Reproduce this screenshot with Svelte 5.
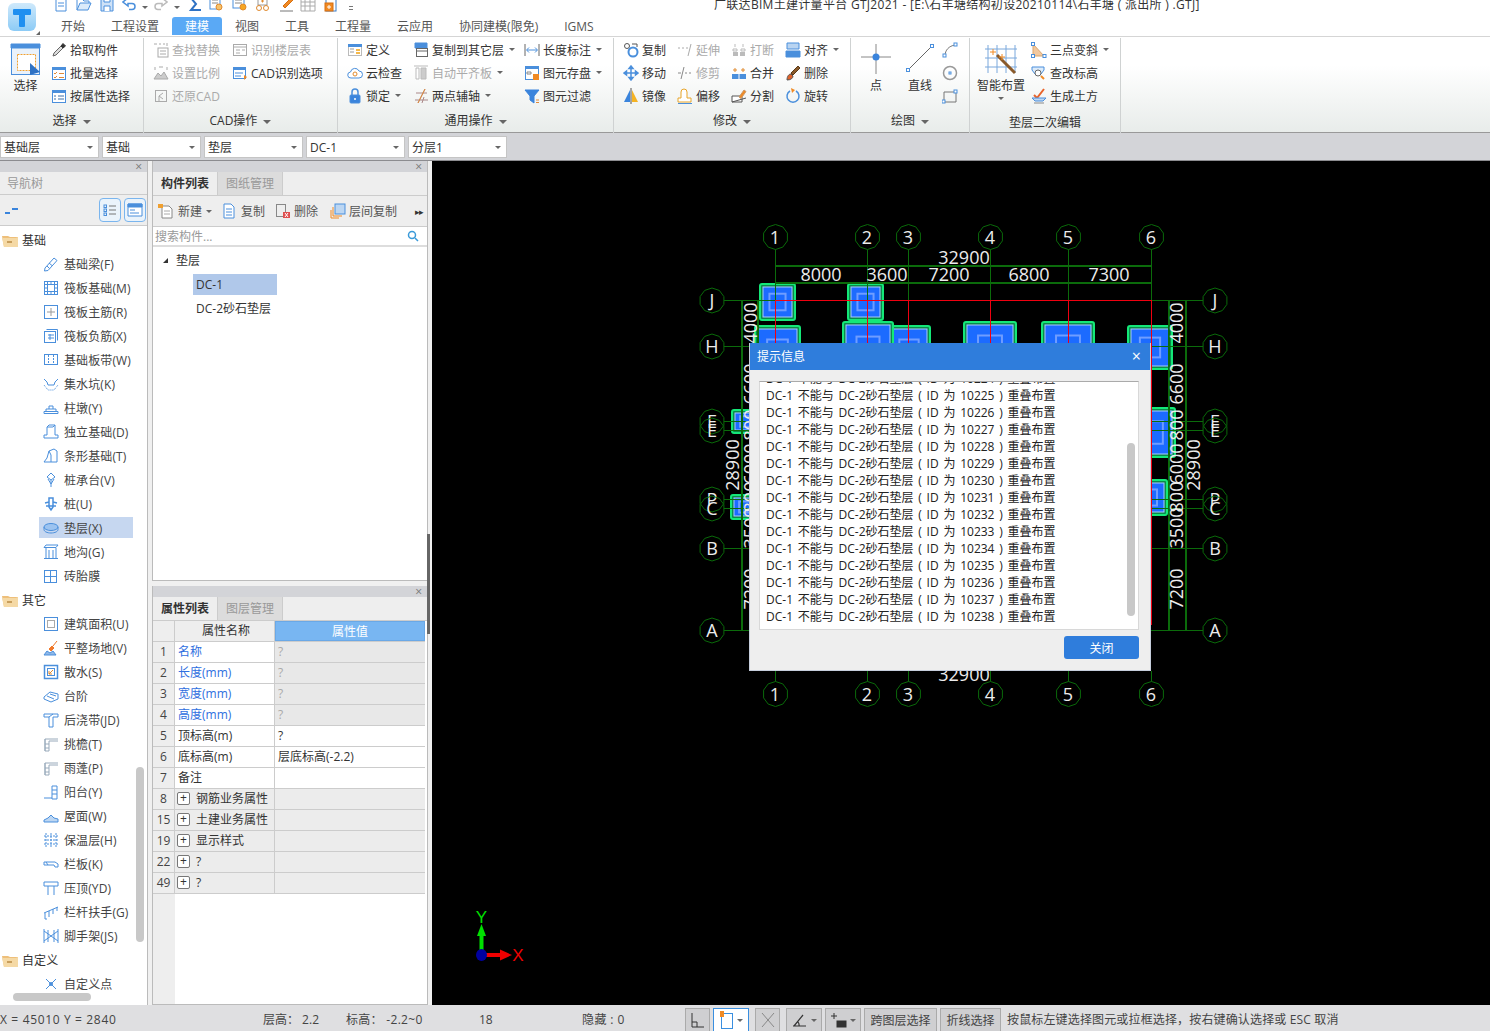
<script>
  const tabs = ['开始', '工程设置', '建模', '视图', '工具', '工程量', '云应用', '协同建模(限免)', 'IGMS'];
  const ICONS = {
    doc: '<path d="M3 1h7l3 3v11H3z" fill="#fff"/><path d="M5 7h6M5 10h6"/>',
    open: '<path d="M1 14V3h5l2 2h5v2" /><path d="M1 14l3-7h11l-3 7z" fill="#dcebfa"/>',
    save: '<path d="M2 1h12v14H2z" fill="#cfe2f7"/><path d="M5 1v5h6V1M5 15v-5h6v5" fill="#fff"/>',
    undo: '<path d="M6 2L1 6l5 4V7.500h4a3 3 0 010 6H7" stroke-width="1.500"/>',
    redo: '<path d="M10 2l5 4-5 4V7.500H6a3 3 0 000 6h3" stroke="#bbb" stroke-width="1.500"/>',
    sigma: '<path d="M13 2H3l5 6-5 6h10" stroke="#2f72c4" stroke-width="2"/>',
    calc: '<rect x="2" y="1" width="10" height="12"/><path d="M4 4h6M4 7h6" stroke="#888"/><circle cx="11" cy="11" r="3" stroke="#e08a2e" fill="#f5c26b"/>',
    view: '<rect x="1" y="1" width="11" height="11"/><path d="M3 4h7M3 7h7" stroke="#888"/><circle cx="11" cy="11" r="3" fill="#f5a623" stroke="#e08a2e"/>',
    glasses: '<rect x="3" y="1" width="9" height="8" stroke="#999"/><path d="M6 5h3M7.500 3.500v3" stroke="#e08a2e"/><circle cx="4" cy="12" r="2.500" stroke="#e08a2e"/><circle cx="11" cy="12" r="2.500" stroke="#e08a2e"/>',
    brush: '<path d="M4 10L12 2l2 2-8 8z" fill="#f08a24" stroke="#d66f10"/><path d="M1 15h13" stroke="#777"/>',
    table: '<path d="M1 2h14v13H1zM1 6h14M1 10h14M5 2v13M10 2v13" stroke="#aaa"/>',
    addbox: '<rect x="2" y="1" width="10" height="14" stroke="#3a7cc8"/><rect x="1" y="7" width="8" height="8" fill="#f08a24" stroke="#d66f10"/><path d="M5 9v4M3 11h4" stroke="#fff"/>',

    pick: '<path d="M2 14l1-3 7-7 2 2-7 7z" fill="#ddd" stroke="#666"/><path d="M10 4l2-2.500 2.500 2.500L12 6z" fill="#333" stroke="#333"/>',
    batch: '<rect x="1.500" y="2.500" width="13" height="12" fill="#fff"/><path d="M1 2h14v3H1z" fill="#4a8fdc" stroke="none"/><path d="M3 8l1 1 2-2M8 8.500h5M3 12l1 1 2-2M8 12.500h5" stroke="#e08a3a"/>',
    attr: '<rect x="1.500" y="2.500" width="13" height="12" fill="#fff"/><path d="M1 2h14v3H1z" fill="#4a8fdc" stroke="none"/><path d="M3 8h2M7 8h6M3 11h2M7 11h6" stroke="#3a6ea8"/>',
    find: '<path d="M1 2h3M6 2h2M10 2h2M14 1v3" stroke="#aaa"/><rect x="5" y="6" width="10" height="9" stroke="#aaa"/><path d="M7 9h6M7 12h6" stroke="#aaa"/>',
    floor: '<rect x="1.500" y="2.500" width="13" height="11" stroke="#aaa"/><path d="M1 5h14M4 8h4M4 11h4M10 8h3" stroke="#aaa"/>',
    scale: '<path d="M2 2v3M14 2v3M6 2h4" stroke="#aaa"/><path d="M1 14l4-6 3 3 3-4 4 7z" fill="#ccc" stroke="#aaa"/>',
    restore: '<rect x="2.500" y="2.500" width="11" height="11" stroke="#aaa"/><path d="M10 5L6 8l4 3M6 8v5" stroke="#aaa"/>',
    cadopt: '<rect x="1.500" y="2.500" width="12" height="11" fill="#fff"/><path d="M1 2h13v3H1z" fill="#4a8fdc" stroke="none"/><path d="M3 8h8M3 11h6" stroke="#4a8fdc"/><path d="M12 10l3 2-3 3z" fill="#f08a24" stroke="none"/>',
    define: '<rect x="1.500" y="2.500" width="13" height="11" fill="#fff" stroke="#bbb"/><path d="M1 2h14v3H1z" fill="#4a8fdc" stroke="none"/><path d="M3 7h4M3 10h4" stroke="#999"/><path d="M9 7h4v2H9zM9 10h4v2H9z" fill="#f5b84a" stroke="none"/>',
    cloud: '<path d="M4 13a3 3 0 01-.5-6A4.500 4.500 0 0112 6a3.500 3.500 0 010 7z" fill="#fff"/><circle cx="8" cy="9" r="2" stroke="#e08a2e"/>',
    lock: '<path d="M5 7V4a3 3 0 016 0v3" stroke-width="1.500"/><rect x="3" y="7" width="10" height="8" rx="1" fill="#3a84dc"/><path d="M8 10v2" stroke="#fff" stroke-width="1.500"/>',
    copyfloor: '<path d="M2 1h12v5H2z" fill="#4a8fdc"/><rect x="3.500" y="6.500" width="11" height="8" fill="#fff" stroke="#666"/><path d="M4 9h10" stroke="#666"/>',
    flush: '<path d="M1 1h14" stroke="#bbb"/><path d="M3 3h3v11H3z" fill="#fff" stroke="#bbb"/><path d="M8 3h5v11H8z" fill="#ccc" stroke="#bbb"/>',
    axis: '<path d="M2 12h13M3 5h11M5 15L12 1M9 15l2-6" stroke="#a88"/><path d="M5 15L12 1" stroke="#e08a3a"/>',
    dim: '<path d="M1 2v12M15 2v12" stroke="#666"/><path d="M3 8h10M5 5.500L2.500 8 5 10.500M11 5.500L13.500 8 11 10.500"/>',
    store: '<rect x="1.500" y="1.500" width="13" height="13" fill="#fff"/><path d="M1 1h14v3H1z" fill="#4a8fdc" stroke="none"/><path d="M3 7h4v2H3z" stroke="#888"/><rect x="9" y="9" width="6" height="6" fill="#f08a24" stroke="none"/>',
    filter: '<path d="M1 2h14L10 8v7L6 12V8z" fill="#3a84dc" stroke="#3a84dc"/><path d="M12 12h3M12 14.500h3" stroke="#e08a3a"/>',
    copy: '<circle cx="4" cy="4" r="2.500" stroke="#555"/><path d="M9 2h5v3" stroke="#555"/><circle cx="10" cy="10" r="4.500" stroke-width="2"/>',
    extend: '<path d="M1 6h2M5 6h2M9 6h2" stroke="#aaa"/><path d="M14 2l-3 12" stroke="#aaa"/>',
    trim: '<path d="M1 8h3M8 8h2M12 8h2" stroke="#888"/><path d="M7 2L4 14" stroke="#888"/>',
    mirror: '<path d="M7 2L1 14h6z" fill="#3a84dc" stroke="none"/><path d="M9 2l6 12H9z" fill="#f5b323" stroke="none"/><path d="M8 0v16" stroke="#555"/>',
    move: '<path d="M8 1v14M1 8h14M8 1L6 3.500h4zM8 15l-2-2.500h4zM1 8l2.500-2v4zM15 8l-2.500-2v4z" stroke-width="1.500" fill="#3a84dc"/>',
    offset: '<path d="M1 14v-4h3V4a3 3 0 016 0v6h4v4z" fill="#fff" stroke="#e8a52a"/><path d="M1 15.500h14" stroke="#4a8fdc"/>',
    split: '<path d="M1 14V8h10v6z" fill="#fff" stroke="#555"/><path d="M1 14l14-4" stroke="#555"/><path d="M8 9l5-7 2 1.500-5 7z" fill="#f08a24" stroke="#c96"/>',
    cut: '<path d="M2 7h4v2H2zM10 7h4v2h-4z" stroke="#bbb"/><path d="M2 10h5v4H2zM9 10h5v4H9z" fill="#bbb" stroke="none"/><path d="M4 2v3M12 2v3" stroke="#bbb"/>',
    merge: '<path d="M1 9h14v5H1z" fill="#4a8fdc" stroke="none"/><path d="M4 3v4M2 5h4M12 3v4M10 5h4" stroke="#e08a2e"/><path d="M8 9v5" stroke="#fff"/>',
    rotate: '<path d="M11 3a6 6 0 11-6 0" stroke-width="1.500"/><path d="M6 0l4 2-3 3z" fill="#f08a24" stroke="none"/>',
    align: '<path d="M2 1h12v6H2z" fill="#b9d4f1"/><path d="M1 9h14v6H1z" fill="#4a8fdc"/>',
    del: '<path d="M6 8L13 1l2 2-7 7z" fill="#8a5a2a" stroke="#5a3a1a"/><path d="M2 15c0-4 2-6 4-6l2 2c0 2-2 4-6 4z" fill="#e0622a" stroke="#555"/>',
    arc: '<path d="M3 14c0-6 4-10 10-11" stroke="#777"/><rect x="1" y="12" width="3" height="3" fill="#fff"/><rect x="12" y="1" width="3" height="3" fill="#fff"/>',
    circle: '<circle cx="8" cy="8" r="6.500" stroke="#999" stroke-width="1.500"/><rect x="7" y="7" width="2" height="2"/>',
    rect: '<path d="M2 4h12v10H2z" stroke="#777"/><rect x="0" y="12" width="3" height="3" fill="#fff"/><rect x="12" y="2" width="3" height="3" fill="#fff"/>',
    tri: '<path d="M2 2v12h11z" fill="#f2c9a0" stroke="#d9a56c"/><rect x="0.500" y="0.500" width="3" height="3" fill="#fff"/><rect x="0.500" y="12.500" width="3" height="3" fill="#fff"/><rect x="12" y="12.500" width="3" height="3" fill="#fff"/>',
    height: '<path d="M1 2h12v3l-3 4H4L1 5z" fill="#dcebfa"/><circle cx="7" cy="8" r="3" fill="#fff" stroke="#666"/><path d="M10 11l3 3" stroke="#f08a24" stroke-width="2"/>',
    earth: '<path d="M3 7l3 3 7-9" stroke="#e8632a" stroke-width="2"/><path d="M1 10h14l-3 3H4z" fill="#bcd6f2"/><path d="M3 15h10" stroke="#888"/>',

    beam: '<path d="M2 12L11 2l3 2.500-9 10L1.500 15zM4 10l2.500 2.500M6 7l3 2.500"/>',
    raft: '<rect x="1.500" y="1.500" width="13" height="13"/><rect x="4.500" y="4.500" width="7" height="7"/><path d="M1 4.500h3M1 8h3M1 11.500h3M12 4.500h3M12 8h3M12 11.500h3M4.500 1v3M8 1v3M11.500 1v3M4.500 12v3M8 12v3M11.500 12v3"/>',
    rmain: '<rect x="1.500" y="1.500" width="13" height="13"/><path d="M8 4v8M4 8h8" stroke="#999"/>',
    rneg: '<rect x="1.500" y="3.500" width="11" height="11"/><path d="M3.500 1.500h11v11M5 7h6M5 10h6M7 6v6" />',
    strip: '<rect x="1.500" y="2.500" width="13" height="10"/><path d="M5.500 3v9M10.500 3v9" stroke-dasharray="2 1"/>',
    pit: '<path d="M1 3l3 3 1 3h6l1-3 3-3"/><path d="M1 9l4 5h6l4-5" stroke-dasharray="1 1"/>',
    pier: '<path d="M1 11.500h14v2H1zM3 11V9h10v2M6 9V6h4v3"/>',
    isol: '<path d="M1 14v-3h3V3h6l2-2v10h3v3zM4 3l2-2h6"/>',
    strf: '<path d="M1 14l3-4 2-7 5-2 3 2v11zM6 3l2 4v7"/>',
    cap: '<path d="M8 1l4 4-4 3-4-3zM8 8v7M5 7l3 5 3-5"/>',
    pile: '<path d="M6 2h4v9l-2 3-2-3zM2 7l4-1M14 7l-4-1M3 10h10" stroke-width="1.500"/>',
    pad: '<ellipse cx="8" cy="7" rx="7" ry="3.500" fill="#9cc3f0"/><path d="M1 7v2.500C1 11.500 4 13 8 13s7-1.500 7-3.500V7"/>',
    ditch: '<path d="M1 14.500h14M3 14V4M13 14V4M1 3.500L3 1h12l-2 2.500zM6 6v8M10 6v8M1 3.500h12"/>',
    brick: '<rect x="1.500" y="2.500" width="12" height="12"/><path d="M7.500 3v11M2 8.500h11"/>',
    area: '<rect x="1.500" y="1.500" width="13" height="13"/><rect x="4.500" y="4.500" width="7" height="7" stroke="#aaa"/>',
    site: '<path d="M1 15l3-4 3 2 3-2 3 4z" fill="#8fb8e8"/><path d="M6 9l3-3 2 2-3 3z" fill="#f0782a" stroke="#f0782a"/><path d="M10 6l4-5" stroke="#f0782a"/>',
    apron: '<rect x="1.500" y="1.500" width="13" height="13" stroke-width="1.500"/><rect x="4.500" y="4.500" width="7" height="7"/><path d="M10 6L6 10M6 7v3h3" stroke="#e08a2e"/>',
    step: '<path d="M1 9l6-5 8 2v5l-7 3-7-3zM4 8l7 3M7 6l6 2"/>',
    post: '<path d="M1 2h14v3h-5v10H6V5H1zM6 5l4-3"/>',
    eave: '<path d="M2 15V3h13M2 3v12h4V5h9M2 8h4M2 12h4" stroke="#9ab"/>',
    balc: '<path d="M1 14h8M9 15V2h5v13zM9 6h5M9 10h5"/>',
    roof: '<path d="M1 12l4-2 3-3 3 3 4 1v3H1z" fill="#bcd6f2"/>',
    insu: '<path d="M3 1v14M8 1v14M13 1v14M1 4h14M1 8h14M1 12h14" stroke-dasharray="2 1"/>',
    rail: '<path d="M1 6h11l3 2v3h-3L11 9H1zM3 6l2 3" />',
    cope: '<path d="M1 2h14v4H1zM5 6v9M11 6v9"/>',
    hand: '<path d="M1 9l14-6M2 9v6M6 7v6M10 5v5M14 3v4M2 15h2"/>',
    scaf: '<path d="M1 1v14M15 1v14M1 3l14 10M15 3L1 13M5 2v12M11 2v12"/>',
    cpoint: '<path d="M3 3l10 10M13 3L3 13"/><circle cx="8" cy="8" r="1.500"/>',

    list: '<rect x="2" y="3" width="2.500" height="2.500"/><rect x="2" y="7" width="2.500" height="2.500"/><rect x="2" y="11" width="2.500" height="2.500"/><path d="M7 4h7M7 8h7M7 12h7" stroke="#777"/>',
    form: '<path d="M1 2h14v12H1z" fill="#fff"/><path d="M1 2h14v3H1z" fill="#4a8fdc"/><path d="M3 8h5M3 11h9" stroke="#4a8fdc"/>',
    newc: '<path d="M4 3h7l3 3v9H4z" fill="#fff" stroke="#888"/><path d="M6 8h6M6 11h6" stroke="#aaa"/><path d="M0 1h5v4H0z" fill="#f0a030" stroke="none"/>',
    copyc: '<path d="M3 1h7l3 3v11H3z" fill="#fff"/><path d="M5 6h6M5 9h6M5 12h6"/>',
    delc: '<rect x="1.500" y="1.500" width="9" height="12" stroke="#888"/><rect x="8" y="9" width="7" height="6" fill="#e05050" stroke="none"/><path d="M10 10l3 4M13 10l-3 4" stroke="#fff"/>',
    floorc: '<rect x="5" y="1" width="10" height="10" fill="#bcd6f2"/><path d="M3 4v9h9M1 7v8h8" stroke="#f08a24"/>',
    folder: '<path d="M0 4h6l2 1h8v10H2z" fill="#eebf7a" stroke="none"/><path d="M0 6h14l2-1v10H2z" fill="#f5d9a5" stroke="none"/><path d="M5 10h5" stroke="#b88a45" stroke-width="1.500"/>'
  };

  const QA = [['doc', 23], ['open', 23], ['save', 23], ['undo', 20], [null, 10], ['redo', 22], [null, 14], ['sigma', 20], ['calc', 24], ['view', 23], ['glasses', 24], ['brush', 21], ['table', 24], ['addbox', 25]];

  const it = (ic, t, extra = {}) => ({ ic, t, ...extra });
  const off = { off: true };
  const dn = { arrow: true };

  const groups = [
    { w: 144, label: '选择', arrow: true, pad: 0, cols: [
      { w: 51, big: { ic: 'select', t: '选择' } },
      { items: [it('pick', '拾取构件'), it('batch', '批量选择'), it('attr', '按属性选择')] }
    ] },
    { w: 194, label: 'CAD操作', arrow: true, pad: 9, cols: [
      { w: 79, items: [it('find', '查找替换', off), it('scale', '设置比例', off), it('restore', '还原CAD', off)] },
      { items: [it('floor', '识别楼层表', off), it('cadopt', 'CAD识别选项')] }
    ] },
    { w: 276, label: '通用操作', arrow: true, pad: 9, cols: [
      { w: 66, items: [it('define', '定义'), it('cloud', '云检查'), it('lock', '锁定', dn)] },
      { w: 111, items: [it('copyfloor', '复制到其它层', dn), it('flush', '自动平齐板', { off: true, arrow: true }), it('axis', '两点辅轴', dn)] },
      { items: [it('dim', '长度标注', dn), it('store', '图元存盘', dn), it('filter', '图元过滤')] }
    ] },
    { w: 237, label: '修改', arrow: true, pad: 9, cols: [
      { w: 54, items: [it('copy', '复制'), it('move', '移动'), it('mirror', '镜像')] },
      { w: 54, items: [it('extend', '延伸', off), it('trim', '修剪', off), it('offset', '偏移')] },
      { w: 54, items: [it('cut', '打断', off), it('merge', '合并'), it('split', '分割')] },
      { items: [it('align', '对齐', dn), it('del', '删除'), it('rotate', '旋转')] }
    ] },
    { w: 119, label: '绘图', arrow: true, pad: 3, cols: [
      { w: 44, big: { ic: 'point', t: '点' } },
      { w: 44, big: { ic: 'line', t: '直线' } },
      { mini: ['arc', 'circle', 'rect'] }
    ] },
    { w: 151, label: '垫层二次编辑', pad: 1, low: true, cols: [
      { w: 60, big: { ic: 'smart', t: '智能布置', arrow: true } },
      { items: [it('tri', '三点变斜', dn), it('height', '查改标高'), it('earth', '生成土方')] }
    ] }
  ];

  const BIG = {
    select: '<rect x="1.500" y="2.500" width="28" height="29" fill="#eaf2fb" stroke="#4a8fdc"/><path d="M1 1h29v4H1z" fill="#4a8fdc"/><rect x="7.500" y="11.500" width="18" height="16" fill="#fff" stroke="#f0a030" stroke-dasharray="2 1"/><path d="M20 20l10 9-10 3z" fill="#2f72c4" stroke="none"/>',
    point: '<path d="M1 14h30M16 1v30" stroke="#888"/><circle cx="16" cy="14" r="3.500" fill="#3a84dc" stroke="none"/>',
    line: '<path d="M5 26L27 4" stroke="#666"/><rect x="2.500" y="25.500" width="3" height="3" fill="#fff"/><rect x="26.500" y="1.500" width="3" height="3" fill="#fff"/>',
    smart: '<path d="M3 2v28M12 2v28M21 2v28M30 2v28M0 6h32M0 15h32M0 24h32" stroke="#7aa8dc"/><path d="M12 12l18 18" stroke="#8a5a2a" stroke-width="3"/><path d="M8 6v6M5 9h6M14 14h6M17 11v6" stroke="#f08a24"/>'
  };

  const treeData = [
    ['基础', [['beam', '基础梁(F)'], ['raft', '筏板基础(M)'], ['rmain', '筏板主筋(R)'], ['rneg', '筏板负筋(X)'], ['strip', '基础板带(W)'], ['pit', '集水坑(K)'], ['pier', '柱墩(Y)'], ['isol', '独立基础(D)'], ['strf', '条形基础(T)'], ['cap', '桩承台(V)'], ['pile', '桩(U)'], ['pad', '垫层(X)', true], ['ditch', '地沟(G)'], ['brick', '砖胎膜']]],
    ['其它', [['area', '建筑面积(U)'], ['site', '平整场地(V)'], ['apron', '散水(S)'], ['step', '台阶'], ['post', '后浇带(JD)'], ['eave', '挑檐(T)'], ['eave', '雨蓬(P)'], ['balc', '阳台(Y)'], ['roof', '屋面(W)'], ['insu', '保温层(H)'], ['rail', '栏板(K)'], ['cope', '压顶(YD)'], ['hand', '栏杆扶手(G)'], ['scaf', '脚手架(JS)']]],
    ['自定义', [['cpoint', '自定义点']]]
  ];

  const props = [
    { n: 1, name: '名称', val: '?', blue: true, shade: true },
    { n: 2, name: '长度(mm)', val: '?', blue: true, shade: true },
    { n: 3, name: '宽度(mm)', val: '?', blue: true, shade: true },
    { n: 4, name: '高度(mm)', val: '?', blue: true, shade: true },
    { n: 5, name: '顶标高(m)', val: '?' },
    { n: 6, name: '底标高(m)', val: '层底标高(-2.2)' },
    { n: 7, name: '备注', val: '' },
    { n: 8, name: '钢筋业务属性', plus: true },
    { n: 15, name: '土建业务属性', plus: true },
    { n: 19, name: '显示样式', plus: true },
    { n: 22, name: '?', plus: true },
    { n: 49, name: '?', plus: true }
  ];

  const combos = ['基础层', '基础', '垫层', 'DC-1', '分层1'];
  const ids = Array.from({ length: 15 }, (_, i) => 10224 + i);

  // drawing coords are page pixels, shifted by the group transform
  const xs = [['1', 775], ['2', 867], ['3', 908], ['4', 990], ['5', 1068], ['6', 1151]];
  const ys = [['J', 300], ['H', 346], ['E', 421], ['E', 430], ['P', 499], ['C', 508], ['B', 548], ['A', 630]];
  const boxes = [
    [760, 284, 35, 36], [848, 284, 35, 36], [755, 326, 45, 50], [888, 326, 42, 50], [843, 322, 50, 54],
    [964, 322, 52, 50], [1042, 322, 52, 50], [1128, 326, 44, 43], [1130, 408, 45, 49], [1130, 480, 37, 35],
    [732, 410, 30, 23], [731, 495, 30, 24]
  ];
  const dims = [['4000', 323], ['6600', 384], ['800', 425], ['6000', 464], ['800', 497], ['3500', 528], ['7200', 589]];
  const tops = [['8000', 821], ['3600', 887], ['7200', 949], ['6800', 1029], ['7300', 1109]];

  function bubblePts(cx, cy) {
    const pts = [];
    for (let i = 0; i < 10; i++) {
      const a = (i * Math.PI) / 5 + Math.PI / 10;
      pts.push((cx + 12.5 * Math.cos(a)).toFixed(1) + ',' + (cy + 12.5 * Math.sin(a)).toFixed(1));
    }
    return pts.join(' ');
  }

  const statusBtns = [[25, 'ortho'], [36, 'snap'], [25, 'cross'], [36, 'angle'], [36, 'plus'], [73, '跨图层选择'], [61, '折线选择']];
</script>

{#snippet icon(name, size = 16)}
  <svg class="ic" width={size} height={size} viewBox="0 0 {size} {size}" fill="none" stroke="#4a8fdc">
    {@html size > 16 ? BIG[name] : ICONS[name]}
  </svg>
{/snippet}

<div class="app">
  <header class="top">
    <div class="logo">
      <div class="tile">
        <svg width="22" height="22" viewBox="0 0 22 22"><path d="M3 4h16v4h-6v12h-4V8H3z" fill="#1f8ff0" stroke="#1f8ff0" stroke-linejoin="round" stroke-width="2"/></svg>
      </div>
      <i class="logomark"></i>
    </div>
    <div class="topright">
      <div class="qa">
        <div class="qaicons">
          {#each QA as q}
            <span class="qaslot" style="width:{q[1]}px">
              {#if q[0]}{@render icon(q[0])}{:else}<i class="arrow qaarrow"></i>{/if}
            </span>
          {/each}
          <span class="qamenu"></span>
        </div>
        <div class="title">广联达BIM土建计量平台 GTJ2021 - [E:\石羊塘结构初设20210114\石羊塘 ( 派出所 ) .GTJ]</div>
      </div>
      <nav class="tabs">
        {#each tabs as t}
          <span class="tab" class:active={t === '建模'}>{t}</span>
        {/each}
      </nav>
    </div>
  </header>

  <section class="ribbon">
    {#each groups as g}
      <div class="group" style="width:{g.w}px">
        <div class="gbody" style="padding-left:{g.pad}px">
          {#each g.cols as c}
            <div class="col" style={c.w ? `width:${c.w}px` : ''}>
              {#if c.big}
                <div class="big">
                  <div class="bigic">
                    <svg width="32" height="32" viewBox="0 0 32 32" fill="none" stroke="#4a8fdc">{@html BIG[c.big.ic]}</svg>
                  </div>
                  <span>{c.big.t}</span>
                  {#if c.big.arrow}<i class="arrow bigarrow"></i>{/if}
                </div>
              {:else if c.mini}
                {#each c.mini as m}
                  <div class="item">{@render icon(m)}</div>
                {/each}
              {:else}
                {#each c.items as i}
                  <div class="item" class:off={i.off}>
                    {@render icon(i.ic)}
                    <span>{i.t}</span>
                    {#if i.arrow}<i class="arrow"></i>{/if}
                  </div>
                {/each}
              {/if}
            </div>
          {/each}
        </div>
        <div class="gfoot" class:low={g.low}>
          {g.label}
          {#if g.arrow}<i class="arrow footarrow"></i>{/if}
        </div>
      </div>
    {/each}
  </section>

  <div class="combos">
    {#each combos as c}
      <div class="combo"><span>{c}</span><i class="arrow"></i></div>
    {/each}
  </div>

  <main class="main">
    <aside class="nav">
      <div class="strip">×</div>
      <div class="navtitle">导航树</div>
      <div class="navtools">
        <svg class="dash" width="14" height="6" viewBox="0 0 14 6"><path d="M0 5h5M7 1h6" stroke="#3a84dc" stroke-width="2"/></svg>
        <span class="grow"></span>
        <button class="navbtn">{@render icon('list')}</button>
        <button class="navbtn">{@render icon('form')}</button>
      </div>
      <div class="tree">
        {#each treeData as f}
          <div class="folder">{@render icon('folder')}<span>{f[0]}</span></div>
          {#each f[1] as l}
            <div class="leaf" class:sel={l[2]}>{@render icon(l[0])}<span>{l[1]}</span></div>
          {/each}
        {/each}
      </div>
      <div class="vthumb"></div>
      <div class="hthumb"></div>
    </aside>

    <div class="mid">
      <div class="splitbar"></div>
      <section class="pane toppane">
        <div class="strip">×</div>
        <div class="ptabs">
          <span class="ptab on">构件列表</span>
          <span class="ptab">图纸管理</span>
        </div>
        <div class="ptools">
          <span class="pt first">{@render icon('newc')}<b>新建</b><i class="arrow"></i></span>
          <span class="pt second">{@render icon('copyc')}<b>复制</b></span>
          <span class="pt third">{@render icon('delc')}<b>删除</b></span>
          <span class="pt fourth">{@render icon('floorc')}<b>层间复制</b></span>
          <span class="grow"></span>
          <span class="more">▸▸</span>
        </div>
        <div class="search">
          <span>搜索构件...</span>
          <svg width="12" height="12" viewBox="0 0 12 12" fill="none" stroke="#3a9ad9" stroke-width="1.500"><circle cx="5" cy="5" r="3.500"/><path d="M8 8l3 3"/></svg>
        </div>
        <div class="clist">
          <div class="chead"><i class="corner"></i>垫层</div>
          <div class="citem csel">DC-1</div>
          <div class="citem">DC-2砂石垫层</div>
        </div>
      </section>

      <section class="pane botpane">
        <div class="strip">×</div>
        <div class="ptabs">
          <span class="ptab on">属性列表</span>
          <span class="ptab">图层管理</span>
        </div>
        <div class="ptable">
          <div class="prow phead">
            <span class="pi"></span>
            <span class="pn">属性名称</span>
            <span class="pv">属性值</span>
          </div>
          {#each props as p}
            <div class="prow" class:shade={p.shade} class:group2={p.plus}>
              <span class="pi">{p.n}</span>
              <span class="pn" class:blue={p.blue}>
                {#if p.plus}<i class="plus">+</i>{/if}{p.name}
              </span>
              <span class="pv" class:q={p.shade}>{p.val || ''}</span>
            </div>
          {/each}
          <div class="pfill"><span class="pi"></span></div>
        </div>
      </section>
    </div>

    <div class="view">
      <svg class="cad" width="1058" height="845" viewBox="0 0 1058 845">
        <g transform="translate(-432 -161)">
          {#each boxes as b}
            <rect x={b[0]} y={b[1]} width={b[2]} height={b[3]} rx="2" fill="#0a8a4a" stroke="#14e878" stroke-width="2"/>
            <rect x={b[0] + 3} y={b[1] + 3} width={b[2] - 6} height={b[3] - 6} fill="#1c6bff" stroke="#a9c8ff"/>
            <rect x={b[0] + b[2] * 0.27} y={b[1] + b[3] * 0.27} width={b[2] * 0.46} height={b[3] * 0.46} fill="none" stroke="#6f9dff" stroke-width="2"/>
          {/each}

          <g stroke="#0b6b0b" fill="none" shape-rendering="crispEdges">
            {#each xs as x}
              <path d="M{x[1]}.5 249V300M{x[1]}.5 671V682"/>
            {/each}
            {#each ys as y}
              <path d="M724 {y[1]}.5H775M1151 {y[1]}.5H1203"/>
            {/each}
            <path d="M775 266H1151M775 283H1151M742 300V630M758 300V630M1169 300V630M1186 300V630" stroke-width="2"/>
          </g>
          <path d="M775 300.500H1151M775.500 300V343M867.500 300V343M908.500 300V343M990.500 300V343M1068.500 300V343M1151.500 300V625" stroke="#f00010" fill="none" shape-rendering="crispEdges"/>

          {#each xs as x}
            {#each [237, 694] as cy}
              <polygon points={bubblePts(x[1] + 0.5, cy)} fill="#000" stroke="#0a6a0a"/>
              <text class="lbl" x={x[1]} y={cy + 6.500}>{x[0]}</text>
            {/each}
          {/each}
          {#each ys as y}
            {#each [712, 1215] as cx}
              <polygon points={bubblePts(cx, y[1] + 0.5)} fill="none" stroke="#0a6a0a"/>
              <text class="lbl" x={cx} y={y[1] + 6.500}>{y[0]}</text>
            {/each}
          {/each}

          <text class="lbl" x="964" y="264">32900</text>
          <text class="lbl" x="964" y="681">32900</text>
          {#each tops as t}
            <text class="lbl" x={t[1]} y="281">{t[0]}</text>
          {/each}
          {#each dims as d}
            <text class="lbl" transform="rotate(-90 1183 {d[1]})" x="1183" y={d[1]}>{d[0]}</text>
            <text class="lbl" transform="rotate(-90 757 {d[1]})" x="757" y={d[1]}>{d[0]}</text>
          {/each}
          <text class="lbl" transform="rotate(-90 1200 465)" x="1200" y="465">28900</text>
          <text class="lbl" transform="rotate(-90 739 465)" x="739" y="465">28900</text>

          <path d="M479.500 950V935h4v15z" fill="#00e000"/>
          <path d="M481.500 924l4.500 12h-9z" fill="#00e000"/>
          <text class="ucs" x="481.500" y="923" fill="#00e000">Y</text>
          <path d="M486 953h14v4h-14z" fill="#f00000"/>
          <path d="M512 955l-12-5.500v11z" fill="#f00000"/>
          <ellipse cx="481.500" cy="955" rx="5.500" ry="6" fill="#0000a0"/>
          <text class="ucs" x="518" y="961" fill="#f00000">X</text>
        </g>
      </svg>

      <div class="dialog">
        <div class="dhead"><span>提示信息</span><span class="dx">×</span></div>
        <div class="dbody">
          <div class="dlist">
            <div class="dscroll">
              {#each ids as id}
                <div class="dline">DC-1 不能与 DC-2砂石垫层 ( ID 为 {id} ) 重叠布置</div>
              {/each}
            </div>
            <div class="dthumb"></div>
          </div>
          <div class="dfoot"><button class="dclose">关闭</button></div>
        </div>
      </div>
    </div>
  </main>

  <footer class="status">
    <span class="st s1">X = 45010 Y = 2840</span>
    <span class="st s2">层高： 2.2</span>
    <span class="st s3">标高： -2.2~0</span>
    <span class="st s4">18</span>
    <span class="st s5">隐藏 : 0</span>
    <div class="sbtns">
      {#each statusBtns as b}
        <span class="sbtn" class:snap={b[1] === 'snap'} class:crossb={b[1] === 'cross'} style="width:{b[0]}px">
          {#if b[1] === 'ortho'}
            <svg width="16" height="16" viewBox="0 0 16 16" fill="none" stroke="#333"><path d="M2 1v14h12M2 10h5v5"/></svg>
          {:else if b[1] === 'snap'}
            <svg width="14" height="20" viewBox="0 0 14 20" fill="none" stroke="#3a8fe0"><rect x="1.500" y="3.500" width="11" height="15" stroke-width="1"/><rect x="0" y="1" width="4" height="6" fill="#f08a24" stroke="none"/></svg><i class="arrow"></i>
          {:else if b[1] === 'cross'}
            <svg width="16" height="16" viewBox="0 0 16 16" fill="none" stroke="#888"><path d="M2 1l12 14M14 1L2 15"/></svg>
          {:else if b[1] === 'angle'}
            <svg width="16" height="16" viewBox="0 0 16 16" fill="none" stroke="#333"><path d="M1 14h13M2 14L11 3M7 14a5 5 0 00-1-4" stroke-width="1.200"/></svg><i class="arrow"></i>
          {:else if b[1] === 'plus'}
            <svg width="16" height="16" viewBox="0 0 16 16" fill="none" stroke="#333"><path d="M3 1v6M0 4h6"/><rect x="6" y="9" width="9" height="6" fill="#333"/></svg><i class="arrow"></i>
          {:else}
            {b[1]}
          {/if}
        </span>
      {/each}
    </div>
    <span class="hint">按鼠标左键选择图元或拉框选择，按右键确认选择或 ESC 取消</span>
  </footer>
</div>

<style>
  :global(body) {
    margin: 0;
    background: #f0f0f0;
  }

  .app {
    width: 1490px;
    height: 1031px;
    overflow: hidden;
    display: flex;
    flex-direction: column;
    font-family: "Open Sans", "Noto Sans CJK SC", sans-serif;
    font-size: 12px;
    color: #333;
  }

  .ic { flex: none; display: block; }
  .grow { flex: 1; }

  .arrow {
    display: inline-block;
    flex: none;
    width: 0;
    height: 0;
    border-left: 3px solid transparent;
    border-right: 3px solid transparent;
    border-top: 3px solid #666;
    margin-left: 6px;
  }

  /* top bar */
  .top {
    height: 36px;
    display: flex;
    background: #fff;
    flex: none;
  }
  .logo {
    width: 48px;
    flex: none;
    padding: 3px 0 0 8px;
    box-sizing: border-box;
    position: relative;
  }
  .tile {
    width: 28px;
    height: 28px;
    border-radius: 6px;
    background: linear-gradient(#cfe9fb, #8ccbf6);
    display: flex;
    align-items: center;
    justify-content: center;
  }
  .logomark {
    position: absolute;
    left: 36px;
    top: 31px;
    width: 0;
    height: 0;
    border-left: 4px solid transparent;
    border-bottom: 4px solid #666;
  }
  .topright { flex: 1; display: flex; flex-direction: column; }
  .qa { height: 17px; display: flex; overflow: hidden; }
  .qaicons {
    width: 300px;
    height: 12px;
    margin-left: 5px;
    display: flex;
    overflow: hidden;
    flex: none;
  }
  .qaslot { flex: none; display: block; margin-top: -4px; }
  .qaarrow { margin: 8px 0 0 0; }
  .qamenu {
    width: 6px;
    height: 2px;
    margin: 6px 0 0 0;
    border-top: 1px solid #777;
    border-bottom: 1px solid #777;
  }
  .title {
    margin: -2px 0 0 361px;
    line-height: 14px;
    letter-spacing: 0.3px;
    white-space: nowrap;
    color: #333;
  }
  .tabs { height: 18px; display: flex; }
  .tab {
    padding: 0 13px;
    line-height: 20px;
    color: #555;
    white-space: nowrap;
  }
  .tab.active {
    background: #5aa9f5;
    color: #fff;
    border-radius: 3px 3px 0 0;
  }

  /* ribbon */
  .ribbon {
    height: 97px;
    flex: none;
    display: flex;
    box-sizing: border-box;
    border-top: 1px solid #d5d5d5;
    border-bottom: 1px solid #999;
    background: linear-gradient(#fff 30%, #e8ecea);
  }
  .group {
    flex: none;
    box-sizing: border-box;
    height: 95px;
    margin-top: 1px;
    border-right: 1px solid #cfd2d2;
    display: flex;
    flex-direction: column;
  }
  .gbody { height: 71px; display: flex; }
  .col { flex: none; }
  .item {
    height: 23px;
    display: flex;
    align-items: center;
    gap: 3px;
    white-space: nowrap;
    color: #333;
  }
  .item .arrow { margin-left: 2px; }
  .item.off { color: #aaa; }
  .big {
    display: flex;
    flex-direction: column;
    align-items: center;
    color: #333;
    white-space: nowrap;
    position: relative;
  }
  .bigic { margin-top: 5px; height: 32px; }
  .big span { margin-top: 2px; line-height: 17px; }
  .bigarrow { position: absolute; top: 59px; left: 50%; margin-left: -3px; }
  .gfoot {
    height: 18px;
    margin-top: 3px;
    line-height: 18px;
    text-align: center;
    color: #333;
  }
  .gfoot.low { margin-top: 5px; }
  .footarrow {
    margin-left: 3px;
    vertical-align: 1px;
    border-left-width: 4px;
    border-right-width: 4px;
    border-top-width: 4px;
  }

  .combos {
    height: 27px;
    flex: none;
    box-sizing: border-box;
    padding: 3px 0 0 0;
    background: #d3d4d8;
    display: flex;
    gap: 3px;
  }
  .combo {
    width: 99px;
    height: 22px;
    box-sizing: border-box;
    background: #fff;
    border: 1px solid #c5c5c5;
    display: flex;
    align-items: center;
    justify-content: space-between;
    padding: 0 5px 0 3px;
    color: #333;
  }

  /* main row */
  .main { height: 845px; flex: none; display: flex; border-top: 1px solid #8c8c90; box-sizing: border-box; }
  .nav {
    width: 148px;
    flex: none;
    box-sizing: border-box;
    background: #fff;
    border-right: 1px solid #bbb;
    position: relative;
    overflow: hidden;
  }
  .strip {
    height: 11px;
    background: #d3d4d8;
    color: #777;
    font-size: 12px;
    line-height: 11px;
    text-align: right;
    padding-right: 5px;
  }
  .navtitle {
    height: 22px;
    line-height: 24px;
    padding-left: 7px;
    background: #eee;
    color: #999;
    border-bottom: 1px solid #ccc;
  }
  .navtools {
    height: 30px;
    background: #eee;
    border-bottom: 1px solid #ccc;
    display: flex;
    align-items: center;
    gap: 3px;
    padding: 0 1px 0 5px;
  }
  .dash { margin-top: 1px; }
  .navbtn {
    width: 22px;
    height: 24px;
    padding: 0;
    border: 1px solid #7ab5ee;
    border-radius: 4px;
    background: #eaf3fb;
    display: flex;
    align-items: center;
    justify-content: center;
  }
  .tree { padding-top: 3px; letter-spacing: 0.1px; }
  .folder, .leaf {
    height: 21px;
    margin-bottom: 3px;
    display: flex;
    align-items: center;
    white-space: nowrap;
  }
  .folder { padding-left: 2px; gap: 4px; color: #333; }
  .leaf {
    margin-left: 39px;
    width: 94px;
    padding-left: 4px;
    box-sizing: border-box;
    gap: 5px;
    color: #444;
  }
  .leaf.sel { background: #c6d7f0; }
  .vthumb {
    position: absolute;
    left: 136px;
    top: 606px;
    width: 8px;
    height: 175px;
    border-radius: 4px;
    background: #c8c8c8;
  }
  .hthumb {
    position: absolute;
    left: 13px;
    top: 832px;
    width: 78px;
    height: 8px;
    border-radius: 4px;
    background: #c8c8c8;
  }

  .mid {
    width: 284px;
    flex: none;
    box-sizing: border-box;
    padding: 0 4px;
    display: flex;
    flex-direction: column;
    gap: 5px;
    position: relative;
    background: #f0f0f0;
  }
  .splitbar {
    position: absolute;
    right: 2px;
    top: 373px;
    width: 3px;
    height: 100px;
    background: #666;
  }
  .pane {
    border-right: 1px solid #bbb;
    border-left: 1px solid #bbb;
    border-bottom: 1px solid #bbb;
    background: #fff;
    display: flex;
    flex-direction: column;
    overflow: hidden;
  }
  .toppane { height: 419px; flex: none; }
  .botpane { flex: 1; }
  .ptabs {
    height: 23px;
    flex: none;
    display: flex;
    background: #eee;
    border-bottom: 1px solid #ccc;
  }
  .ptab {
    width: 64px;
    text-align: center;
    line-height: 24px;
    background: #dcdcdc;
    color: #999;
    border-right: 1px solid #ccc;
    font-weight: 400;
  }
  .ptab.on { background: #eee; color: #333; font-weight: 700; }
  .ptools {
    height: 30px;
    flex: none;
    display: flex;
    align-items: center;
    background: #eee;
    border-bottom: 1px solid #ccc;
    padding-left: 5px;
    color: #555;
  }
  .pt { display: flex; align-items: center; gap: 3px; }
  .pt b { font-weight: 400; }
  .first { margin-right: 9px; gap: 4px; }
  .first .arrow { margin-left: 0; }
  .second { margin-right: 10px; gap: 4px; }
  .third { margin-right: 12px; gap: 3px; }
  .more { font-size: 9px; margin-right: 4px; letter-spacing: -1px; color: #333; }
  .search {
    height: 20px;
    flex: none;
    box-sizing: border-box;
    border-bottom: 2px solid #ddd;
    display: flex;
    align-items: center;
    justify-content: space-between;
    padding: 0 8px 1px 2px;
    color: #999;
  }
  .clist { padding-top: 3px; flex: 1; }
  .chead {
    height: 21px;
    line-height: 21px;
    padding-left: 23px;
    position: relative;
    color: #333;
  }
  .corner {
    position: absolute;
    left: 10px;
    top: 8px;
    width: 0;
    height: 0;
    border-left: 5px solid transparent;
    border-bottom: 5px solid #333;
  }
  .citem {
    width: 84px;
    height: 21px;
    line-height: 21px;
    margin: 3px 0 0 40px;
    padding-left: 3px;
    box-sizing: border-box;
    white-space: nowrap;
    color: #333;
  }
  .csel { background: #b0c8ea; }

  .ptable { flex: 1; display: flex; flex-direction: column; }
  .prow {
    height: 21px;
    width: 272px;
    flex: none;
    box-sizing: border-box;
    display: flex;
    border-bottom: 1px solid #ccc;
    line-height: 20px;
  }
  .pi {
    width: 22px;
    flex: none;
    box-sizing: border-box;
    background: #eee;
    border-right: 1px solid #ccc;
    text-align: center;
    color: #444;
  }
  .pn {
    width: 100px;
    flex: none;
    box-sizing: border-box;
    padding-left: 3px;
    border-right: 1px solid #ccc;
    display: flex;
    align-items: center;
    white-space: nowrap;
    color: #333;
  }
  .pv {
    width: 150px;
    flex: none;
    box-sizing: border-box;
    padding-left: 3px;
    white-space: nowrap;
    color: #333;
  }
  .phead { background: #eee; height: 21px; }
  .phead .pn { justify-content: center; }
  .phead .pv {
    background: #78b6f2;
    color: #fff;
    text-align: center;
    border: 1px solid #6aa8e6;
    padding: 0;
    line-height: 19px;
  }
  .blue { color: #2f6fe0; }
  .shade .pv { background: #e8e8e8; }
  .q { color: #aaa; }
  .group2 .pn, .group2 .pv { background: #ececec; }
  .plus {
    width: 11px;
    height: 11px;
    margin: -2px 6px 0 -1px;
    border: 1px solid #777;
    border-radius: 2px;
    background: #fff;
    font-style: normal;
    line-height: 10px;
    text-align: center;
    color: #333;
    flex: none;
  }
  .pfill { flex: 1; display: flex; }
  .pfill .pi { border: none; }

  /* cad view */
  .view { flex: 1; background: #000; position: relative; overflow: hidden; }
  .cad { display: block; }
  .lbl {
    font-family: "Open Sans", sans-serif;
    font-size: 18px;
    fill: #ececec;
    text-anchor: middle;
  }
  .ucs {
    font-family: "Liberation Sans", sans-serif;
    font-size: 17px;
    text-anchor: middle;
  }

  .dialog {
    position: absolute;
    left: 317px;
    top: 182px;
    width: 402px;
    height: 328px;
    display: flex;
    flex-direction: column;
    box-sizing: border-box;
    background: #eee;
    border: 1px solid #c6cedc;
    border-top: none;
  }
  .dhead {
    height: 27px;
    flex: none;
    box-sizing: border-box;
    background: #2f7ddc;
    color: #fff;
    display: flex;
    align-items: center;
    justify-content: space-between;
    padding: 0 9px 2px 7px;
  }
  .dx { font-size: 16px; line-height: 16px; }
  .dbody { flex: 1; padding: 11px 11px 0 9px; }
  .dlist {
    height: 249px;
    box-sizing: border-box;
    background: #fff;
    border: 1px solid #d8d8d8;
    border-top-color: #aaa;
    position: relative;
    overflow: hidden;
  }
  .dscroll { margin-top: -12px; padding-left: 6px; }
  .dline {
    height: 17px;
    line-height: 17px;
    word-spacing: 1.65px;
    color: #222;
    white-space: nowrap;
  }
  .dthumb {
    position: absolute;
    left: 367px;
    top: 61px;
    width: 8px;
    height: 173px;
    border-radius: 4px;
    background: #c8c8c8;
  }
  .dfoot { display: flex; justify-content: flex-end; padding-top: 6px; }
  .dclose {
    width: 75px;
    height: 23px;
    padding: 0;
    border: none;
    border-radius: 3px;
    background: #2f7ddc;
    color: #fff;
    font: inherit;
  }

  /* status bar */
  .status {
    height: 26px;
    flex: none;
    background: #dfdfe1;
    display: flex;
    align-items: flex-end;
    white-space: nowrap;
    color: #444;
  }
  .st { line-height: 22px; flex: none; }
  .s1 { width: 263px; letter-spacing: 0.65px; }
  .s2 { width: 83px; }
  .s3 { width: 133px; letter-spacing: 0.3px; }
  .s4 { width: 103px; }
  .s5 { width: 103px; letter-spacing: 0.4px; }
  .sbtns { display: flex; flex: none; gap: 3px; }
  .sbtn {
    height: 23px;
    box-sizing: border-box;
    background: #cfcfd1;
    border: 1px solid #aaa;
    border-bottom: none;
    display: flex;
    align-items: center;
    justify-content: center;
    color: #444;
  }
  .sbtn .arrow { margin-left: 3px; }
  .snap { background: #fff; border-color: #3a8fe0; }
  .crossb { margin: 0 3px; }
  .hint { margin-left: 6px; line-height: 22px; letter-spacing: 0.15px; }
</style>
